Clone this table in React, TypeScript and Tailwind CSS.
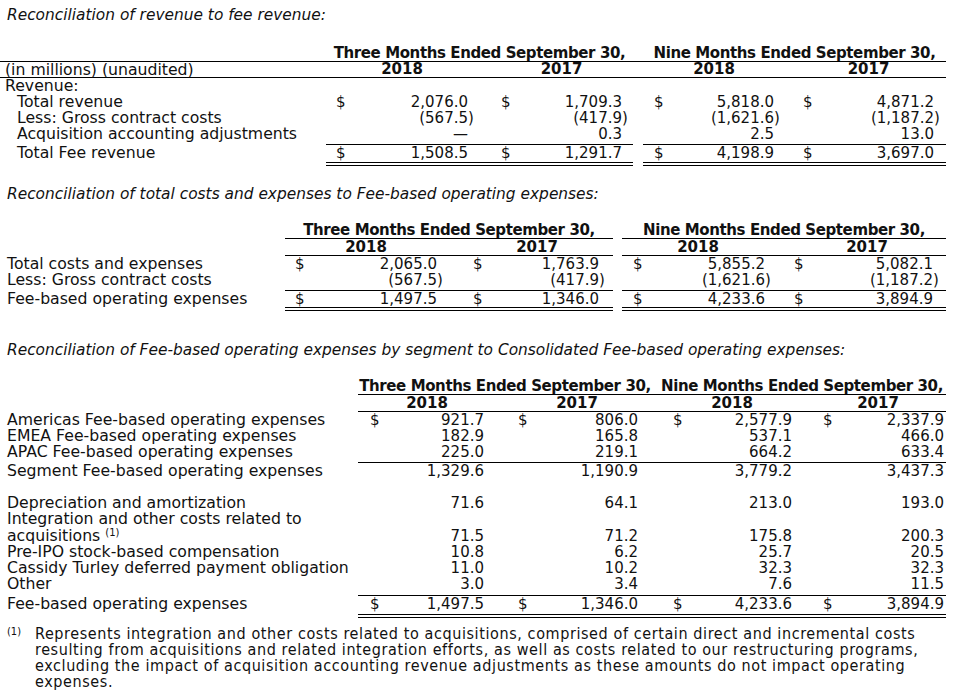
import React from "react";

function Num({ v }: { v: string }) {
  if (v.startsWith("(") && v.endsWith(")")) {
    return (
      <span className="whitespace-nowrap">
        {v.slice(0, -1)}
        <span className="inline-block w-0">)</span>
      </span>
    );
  }
  return <span className="whitespace-nowrap">{v}</span>;
}

function V({ c, d, v, b = "" }: { c: string; d?: boolean; v: string; b?: string }) {
  return (
    <div className={`flex justify-between ${c} ${b}`}>
      <span>{d ? "$" : ""}</span>
      <Num v={v} />
    </div>
  );
}

/* Section 1 columns */
const s1 = [
  "w-[154px] pl-[10px] pr-[12px]",
  "w-[153px] pl-[21px] pr-[11px]",
  "w-[147px] pl-[11px] pr-[16px]",
  "w-[156px] pl-[13px] pr-[12px]",
];
/* Section 2 columns */
const s2 = [
  "w-[170px] pl-[10px] pr-[18px]",
  "w-[158px] pl-[18px] pr-[14px]",
  "w-[158px] pl-[11px] pr-[15px]",
  "w-[166px] pl-[14px] pr-[13px]",
];
/* Section 3 columns */
const s3 = [
  "w-[144px] pl-[12px] pr-[18px]",
  "w-[150px] pl-[16px] pr-[14px]",
  "w-[148px] pl-[21px] pr-[8px]",
  "w-[146px] pl-[23px] pr-[2px]",
];

const TOT = "border-t border-b-4 border-double border-black";
const LBL = "text-[15.7px] whitespace-nowrap";

function Title({ t }: { t: string }) {
  return <div className="italic pl-[7px] h-[16px] leading-[16px] text-[15.4px] whitespace-nowrap">{t}</div>;
}

function Section1() {
  const rows: [string, string[], boolean][] = [
    ["Total revenue", ["2,076.0", "1,709.3", "5,818.0", "4,871.2"], true],
    ["Less: Gross contract costs", ["(567.5)", "(417.9)", "(1,621.6)", "(1,187.2)"], false],
    ["Acquisition accounting adjustments", ["—", "0.3", "2.5", "13.0"], false],
  ];
  return (
    <div>
      <Title t="Reconciliation of revenue to fee revenue:" />
      <div className="mt-[22px] flex h-[17px] leading-[16px] border-b border-black w-[946px] font-bold tracking-[-0.4px]">
        <div className="w-[326px]" />
        <div className="w-[307px] text-center whitespace-nowrap">Three Months Ended September 30,</div>
        <div className="w-[10px]" />
        <div className="w-[303px] text-center whitespace-nowrap">Nine Months Ended September 30,</div>
      </div>
      <div className="flex h-[16px] leading-[15px] border-b border-black w-[946px]">
        <div className={`w-[326px] pl-[5px] ${LBL}`}>(in millions) (unaudited)</div>
        <div className={`${s1[0]} text-center font-bold`}>2018</div>
        <div className={`${s1[1]} text-center font-bold`}>2017</div>
        <div className="w-[10px]" />
        <div className={`${s1[2]} text-center font-bold`}>2018</div>
        <div className={`${s1[3]} text-center font-bold`}>2017</div>
      </div>
      <div className="flex h-[16px] leading-[16px]">
        <div className={`w-[326px] pl-[5px] ${LBL}`}>Revenue:</div>
      </div>
      {rows.map(([l, vals, d]) => (
        <div key={l} className="flex h-[16px] leading-[16px]">
          <div className={`w-[326px] pl-[17px] ${LBL}`}>{l}</div>
          <V c={s1[0]} d={d} v={vals[0]} />
          <V c={s1[1]} d={d} v={vals[1]} />
          <div className="w-[10px]" />
          <V c={s1[2]} d={d} v={vals[2]} />
          <V c={s1[3]} d={d} v={vals[3]} />
        </div>
      ))}
      <div className="mt-[2px] flex leading-[16px]">
        <div className={`w-[326px] pl-[17px] border-t border-b-4 border-transparent pb-[1px] ${LBL}`}>Total Fee revenue</div>
        <V c={s1[0]} d v="1,508.5" b={`${TOT} pb-[1px]`} />
        <V c={s1[1]} d v="1,291.7" b={`${TOT} pb-[1px]`} />
        <div className="w-[10px]" />
        <V c={s1[2]} d v="4,198.9" b={`${TOT} pb-[1px]`} />
        <V c={s1[3]} d v="3,697.0" b={`${TOT} pb-[1px]`} />
      </div>
    </div>
  );
}

function Section2() {
  const rows: [string, string[], boolean][] = [
    ["Total costs and expenses", ["2,065.0", "1,763.9", "5,855.2", "5,082.1"], true],
    ["Less: Gross contract costs", ["(567.5)", "(417.9)", "(1,621.6)", "(1,187.2)"], false],
  ];
  return (
    <div className="mt-[20px]">
      <Title t="Reconciliation of total costs and expenses to Fee-based operating expenses:" />
      <div className="mt-[20px] flex h-[17px] leading-[16px] font-bold tracking-[-0.4px]">
        <div className="w-[285px]" />
        <div className="w-[328px] text-center whitespace-nowrap border-b border-black">Three Months Ended September 30,</div>
        <div className="w-[9px]" />
        <div className="w-[324px] text-center whitespace-nowrap border-b border-black">Nine Months Ended September 30,</div>
      </div>
      <div className="flex h-[17px] leading-[16px] font-bold">
        <div className="w-[285px]" />
        <div className="w-[328px] flex border-b border-black">
          <div className="w-[170px] pr-[8px] text-center">2018</div>
          <div className="w-[158px] pl-[6px] text-center">2017</div>
        </div>
        <div className="w-[9px]" />
        <div className="w-[324px] flex border-b border-black">
          <div className="w-[158px] pr-[6px] text-center">2018</div>
          <div className="w-[166px] pl-[8px] text-center">2017</div>
        </div>
      </div>
      {rows.map(([l, vals, d]) => (
        <div key={l} className="flex h-[16px] leading-[16px]">
          <div className={`w-[285px] pl-[7px] ${LBL}`}>{l}</div>
          <V c={s2[0]} d={d} v={vals[0]} />
          <V c={s2[1]} d={d} v={vals[1]} />
          <div className="w-[9px]" />
          <V c={s2[2]} d={d} v={vals[2]} />
          <V c={s2[3]} d={d} v={vals[3]} />
        </div>
      ))}
      <div className="mt-[2px] flex leading-[16px]">
        <div className={`w-[285px] pl-[7px] border-t border-b-4 border-transparent ${LBL}`}>Fee-based operating expenses</div>
        <V c={s2[0]} d v="1,497.5" b={TOT} />
        <V c={s2[1]} d v="1,346.0" b={TOT} />
        <div className="w-[9px]" />
        <V c={s2[2]} d v="4,233.6" b={TOT} />
        <V c={s2[3]} d v="3,894.9" b={TOT} />
      </div>
    </div>
  );
}

function Row3({ l, vals, d, cls = "" }: { l: string; vals: string[]; d?: boolean; cls?: string }) {
  return (
    <div className={`flex h-[16px] leading-[16px] ${cls}`}>
      <div className={`w-[358px] pl-[7px] ${LBL}`}>{l}</div>
      <V c={s3[0]} d={d} v={vals[0]} />
      <V c={s3[1]} d={d} v={vals[1]} />
      <V c={s3[2]} d={d} v={vals[2]} />
      <V c={s3[3]} d={d} v={vals[3]} />
    </div>
  );
}

function Section3() {
  return (
    <div className="mt-[31px]">
      <Title t="Reconciliation of Fee-based operating expenses by segment to Consolidated Fee-based operating expenses:" />
      <div className="mt-[20px] flex h-[17px] leading-[16px] font-bold tracking-[-0.4px]">
        <div className="w-[358px]" />
        <div className="w-[588px] flex border-b border-black">
          <div className="w-[294px] text-center whitespace-nowrap">Three Months Ended September 30,</div>
          <div className="w-[294px] pl-[6px] text-center whitespace-nowrap">Nine Months Ended September 30,</div>
        </div>
      </div>
      <div className="flex h-[17px] leading-[16px] font-bold">
        <div className="w-[358px]" />
        <div className="w-[588px] flex border-b border-black">
          <div className="w-[144px] pr-[6px] text-center">2018</div>
          <div className="w-[150px] text-center">2017</div>
          <div className="w-[148px] pl-[12px] text-center">2018</div>
          <div className="w-[146px] pl-[10px] text-center">2017</div>
        </div>
      </div>
      <Row3 l="Americas Fee-based operating expenses" vals={["921.7", "806.0", "2,577.9", "2,337.9"]} d />
      <Row3 l="EMEA Fee-based operating expenses" vals={["182.9", "165.8", "537.1", "466.0"]} />
      <Row3 l="APAC Fee-based operating expenses" vals={["225.0", "219.1", "664.2", "633.4"]} />
      <div className="mt-[2px] flex leading-[16px]">
        <div className={`w-[358px] pl-[7px] border-t border-transparent ${LBL}`}>Segment Fee-based operating expenses</div>
        <div className="w-[588px] flex border-t border-black">
          <V c={s3[0]} v="1,329.6" />
          <V c={s3[1]} v="1,190.9" />
          <V c={s3[2]} v="3,779.2" />
          <V c={s3[3]} v="3,437.3" />
        </div>
      </div>
      <Row3 l="Depreciation and amortization" vals={["71.6", "64.1", "213.0", "193.0"]} cls="mt-[16px]" />
      <div className="flex h-[33px] leading-[16px] items-end">
        <div className={`w-[358px] pl-[7px] self-start ${LBL}`}>
          <div className="h-[16px]">Integration and other costs related to</div>
          <div className="h-[17px] pt-[1px]">
            acquisitions <span className="relative top-[-5px] text-[10px] leading-none">(1)</span>
          </div>
        </div>
        <V c={s3[0]} v="71.5" />
        <V c={s3[1]} v="71.2" />
        <V c={s3[2]} v="175.8" />
        <V c={s3[3]} v="200.3" />
      </div>
      <Row3 l="Pre-IPO stock-based compensation" vals={["10.8", "6.2", "25.7", "20.5"]} />
      <Row3 l="Cassidy Turley deferred payment obligation" vals={["11.0", "10.2", "32.3", "32.3"]} />
      <Row3 l="Other" vals={["3.0", "3.4", "7.6", "11.5"]} />
      <div className="mt-[3px] flex leading-[16px]">
        <div className={`w-[358px] pl-[7px] border-t border-transparent ${LBL}`}>Fee-based operating expenses</div>
        <div className={`w-[588px] flex pb-[2px] ${TOT}`}>
          <V c={s3[0]} d v="1,497.5" />
          <V c={s3[1]} d v="1,346.0" />
          <V c={s3[2]} d v="4,233.6" />
          <V c={s3[3]} d v="3,894.9" />
        </div>
      </div>
    </div>
  );
}

function Footnote() {
  return (
    <div className="mt-[8px] flex font-['DejaVu_Sans_Condensed','DejaVu_Sans',sans-serif] font-stretch-condensed text-[16px] leading-[16px] tracking-[0.6px]">
      <div className="w-[35px] pl-[7px] text-[11px] leading-[12px] tracking-normal">(1)</div>
      <div className="whitespace-nowrap">
        Represents integration and other costs related to acquisitions, comprised of certain direct and incremental costs
        <br />
        resulting from acquisitions and related integration efforts, as well as costs related to our restructuring programs,
        <br />
        excluding the impact of acquisition accounting revenue adjustments as these amounts do not impact operating
        <br />
        expenses.
      </div>
    </div>
  );
}

export default function App() {
  return (
    <div className="w-[964px] h-[691px] bg-white text-[#111] font-['DejaVu_Sans',sans-serif] text-[15px] overflow-hidden pt-[7px]">
      <Section1 />
      <Section2 />
      <Section3 />
      <Footnote />
    </div>
  );
}
